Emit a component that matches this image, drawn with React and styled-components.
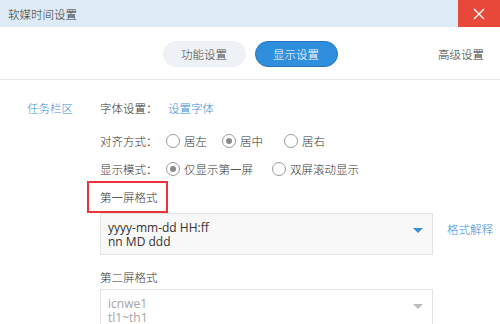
import React from 'react';
import styled, { createGlobalStyle } from 'styled-components';

const Global = createGlobalStyle`
  body {
    margin: 0;
    background: #fff;
    font-family: "Noto Sans CJK SC", "Noto Sans", sans-serif;
    font-size: 11.5px;
    font-weight: 300;
    color: #333;
    overflow: hidden;
  }
`;

const Window = styled.div`
  width: 500px;
  height: 324px;
  overflow: hidden;
  background: #fff;
`;

const TitleBar = styled.div`
  height: 27px;
  display: flex;
  align-items: center;
  background: #deebf6;
`;

const Title = styled.div`
  flex: 1;
  padding-left: 8px;
  color: #333;
`;

const Close = styled.div`
  width: 42px;
  height: 27px;
  background: #e8483a;
  display: flex;
  align-items: center;
  justify-content: center;
`;

const TabBar = styled.div`
  height: 52px;
  border-bottom: 1px solid #e6e6e6;
  display: grid;
  grid-template-columns: 1fr auto 1fr;
  align-items: center;
`;

const Tabs = styled.div`
  display: flex;
  gap: 9px;
  grid-column: 2;
  padding-top: 2px;
`;

const Tab = styled.div`
  width: 83px;
  height: 26px;
  box-sizing: border-box;
  border-radius: 13px;
  display: flex;
  align-items: center;
  justify-content: center;
  background: ${p => (p.$active ? '#2f8fdc' : '#eef1f5')};
  border: 1px solid ${p => (p.$active ? '#2675bd' : '#eef1f5')};
  color: ${p => (p.$active ? '#fff' : '#444')};
`;

const SideTab = styled.div`
  justify-self: end;
  padding-right: 16px;
  padding-top: 2px;
  color: #333;
`;

const Main = styled.div`
  display: flex;
  padding-top: 16px;
`;

const Sidebar = styled.div`
  width: 100px;
  box-sizing: border-box;
  padding-left: 27px;
`;

const SideItem = styled.div`
  height: 24px;
  line-height: 24px;
  color: #3a8fd8;
`;

const Content = styled.div`
  flex: 1;
  display: flex;
  flex-direction: column;
  align-items: flex-start;
`;

const Row = styled.div`
  display: flex;
  align-items: center;
  height: 24px;
  margin-top: ${p => p.$gap || 0}px;
`;

const Label = styled.div`
  width: 66px;
  color: #333;
`;

const Link = styled.span`
  color: #3a8fd8;
  margin-left: ${p => p.$ml || 0}px;
`;

const Option = styled.div`
  display: flex;
  align-items: center;
  width: ${p => p.$w}px;
  gap: 4px;
  color: #333;
`;

const Radio = styled.span`
  width: 14px;
  height: 14px;
  box-sizing: border-box;
  border: 1.5px solid #9a9a9a;
  border-radius: 50%;
  display: flex;
  align-items: center;
  justify-content: center;
  &::after {
    content: '';
    width: 6px;
    height: 6px;
    border-radius: 50%;
    background: ${p => (p.$checked ? '#8a8a8a' : 'transparent')};
  }
`;

const Boxed = styled.div`
  margin-left: -13px;
  height: 32px;
  box-sizing: border-box;
  padding: 0 8px 0 11px;
  border: 2px solid #e8343a;
  display: flex;
  align-items: center;
  color: #333;
`;

const SectionLabel = styled.div`
  height: 24px;
  line-height: 24px;
  margin-top: 10px;
  color: #333;
`;

const SelectRow = styled.div`
  display: flex;
  align-items: flex-start;
  gap: 14px;
`;

const Select = styled.div`
  width: 333px;
  height: 42px;
  box-sizing: border-box;
  border: 1px solid #e2e2e2;
  padding: 7px 0 0 7px;
  display: flex;
  justify-content: space-between;
  font-family: "Open Sans", "Noto Sans", sans-serif;
  font-weight: 400;
  font-size: 12px;
  line-height: 14px;
  color: ${p => (p.$muted ? '#a5a5a5' : '#333')};
  background: ${p => (p.$muted ? '#fff' : '#f8f8f8')};
`;

const Arrow = styled.span`
  margin: 7px 9px 0 0;
  width: 0;
  height: 0;
  border-left: 5px solid transparent;
  border-right: 5px solid transparent;
  border-top: 5px solid ${p => (p.$muted ? '#bcbcbc' : '#2f8fdc')};
`;

const Explain = styled.div`
  color: #3a8fd8;
  padding-top: 8px;
`;

export default function App() {
  return (
    <Window>
      <Global />
      <TitleBar>
        <Title>软媒时间设置</Title>
        <Close>
          <svg width="12" height="12" viewBox="0 0 12 12">
            <path d="M1 1 L11 11 M11 1 L1 11" stroke="#fff" strokeWidth="1.4" />
          </svg>
        </Close>
      </TitleBar>
      <TabBar>
        <Tabs>
          <Tab>功能设置</Tab>
          <Tab $active>显示设置</Tab>
        </Tabs>
        <SideTab>高级设置</SideTab>
      </TabBar>
      <Main>
        <Sidebar>
          <SideItem>任务栏区</SideItem>
        </Sidebar>
        <Content>
          <Row>
            <Label>字体设置：</Label>
            <Link $ml={2}>设置字体</Link>
          </Row>
          <Row $gap={9}>
            <Label>对齐方式：</Label>
            <Option $w={56}>
              <Radio />
              居左
            </Option>
            <Option $w={62}>
              <Radio $checked />
              居中
            </Option>
            <Option $w={60}>
              <Radio />
              居右
            </Option>
          </Row>
          <Row $gap={4}>
            <Label>显示模式：</Label>
            <Option $w={106}>
              <Radio $checked />
              仅显示第一屏
            </Option>
            <Option $w={90}>
              <Radio />
              双屏滚动显示
            </Option>
          </Row>
          <Boxed>第一屏格式</Boxed>
          <SelectRow>
            <Select>
              <div>
                yyyy-mm-dd HH:ff
                <br />
                nn MD ddd
              </div>
              <Arrow />
            </Select>
            <Explain>格式解释</Explain>
          </SelectRow>
          <SectionLabel>第二屏格式</SectionLabel>
          <SelectRow>
            <Select $muted>
              <div>
                icnwe1
                <br />
                tl1~th1
              </div>
              <Arrow $muted />
            </Select>
          </SelectRow>
        </Content>
      </Main>
    </Window>
  );
}
